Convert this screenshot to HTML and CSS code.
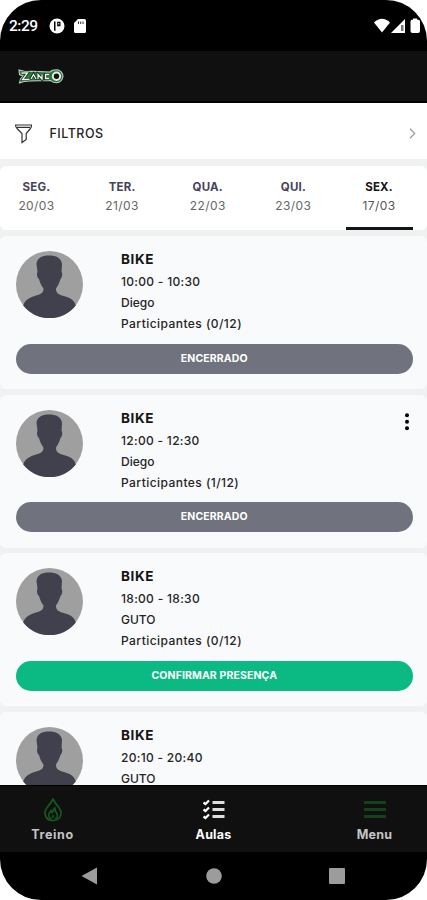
FILE: index.html
```html
<!DOCTYPE html>
<html lang="pt-BR">
<head>
<meta charset="utf-8">
<title>Aulas</title>
<link rel="stylesheet" href="styles.css">
</head>
<body>
<svg class="defs" width="0" height="0" aria-hidden="true">
  <symbol id="person" viewBox="0 0 67 67">
    <circle cx="33.5" cy="33.5" r="33.5" fill="#a09fa0"/>
    <path fill="#41404d" d="M20.500 13C21 7 26 4.500 33 4.500S45.500 7 46 13L45.500 21C47 22 46 27 44.500 28C43 33 41.500 35 40 37.500C40 42 42 43 46 44.500C53 46.500 58 48 59.800 54.500A33.500 33.500 0 0 1 7.200 54.500C9 48.500 14 46.500 20 44.500C25 43 27.500 42 27.500 37.500C25.500 35 24 32 23 28C21 27 20.500 22 21.500 21Z"/>
  </symbol>
</svg>
<div class="phone">
  <header class="status">
    <span class="clock">2:29</span>
    <svg class="app-dot" viewBox="0 0 16 16"><circle cx="8" cy="8" r="7.500" fill="#fff"/><path d="M5 3.500V11.500Q5 13 6.500 13V3.500ZM8.200 3.800H11.500V8.200H8.200Z" fill="#000"/><path d="M9.300 5H10.300V6.500H9.300Z" fill="#fff"/></svg>
    <svg class="sd" viewBox="0 0 12 14"><path d="M4 0H10.500Q12 0 12 1.500V12.500Q12 14 10.500 14H1.500Q0 14 0 12.500V4Z" fill="#fff"/><path d="M4.500 2.500V5M6.700 2.500V5M9 2.500V5" stroke="#333" stroke-width="1"/></svg>
    <svg class="signals" viewBox="0 0 48 16"><path d="M0 4.500Q8-3 16 4.500L8 14.500Z" fill="#fff"/><path d="M31 1V15H17Z" fill="#fff"/><path d="M27 7H29.500V13H27Z" fill="#777"/><path d="M39 1.500V.5H43V1.500Q46 1.500 46 3.500V13Q46 15 44 15H38.500Q36.500 15 36.500 13V3.500Q36.500 1.500 39 1.500Z" fill="#fff"/></svg>
  </header>
  <div class="brand">
    <svg viewBox="0 0 46 15" role="img" aria-label="Zanco"><path d="M1 1L7 2.500L14 2.300L32 3Q34 .8 38.500 .8Q42.500 .8 44.500 5L45 7.500Q44 13.500 38.500 13.800Q34.500 13.800 32.500 11.500L12 12L6 12.500L1.500 14L2.500 10L5 7L1.500 5.500Z" fill="#267a3b" stroke="#c5cdc7" stroke-width="1.100"/><path d="M3.500 4H9.500L4.500 10.500H11.500M12.500 10.500L15.500 5L18 10.500M20 10.500V5.500L24 10.500V5.500M31 5.500H27V10H31" fill="none" stroke="#102b19" stroke-width="2.600"/><path d="M3.500 4H9.500L4.500 10.500H11.500M13 10L15.500 5.500L18 10M20 10V5.500L24 10V5.500M31 5.500H27.500V9.500H31" fill="none" stroke="#f0f5f0" stroke-width="1.300"/><circle cx="38.500" cy="7.300" r="3.700" fill="#111" stroke="#e5eae5" stroke-width="2"/></svg>
  </div>
  <section class="filters">
    <svg class="funnel" viewBox="0 0 20 20"><path d="M1.500 1H17.500Q18 3 16 5L12.200 9.500V15.500L8 18.500V9.500L3.500 5Q1.500 3 1.500 1ZM3 3.300H16" fill="none" stroke="#333" stroke-width="1.200"/></svg>
    <span class="filters-label">FILTROS</span>
    <svg class="chevron" viewBox="0 0 6 10"><path d="M.7.700L5 5L.7 9.300" fill="none" stroke="#999" stroke-width="1.100"/></svg>
  </section>
  <nav class="days">
    <div class="day"><b>SEG.</b><span>20/03</span></div>
    <div class="day"><b>TER.</b><span>21/03</span></div>
    <div class="day"><b>QUA.</b><span>22/03</span></div>
    <div class="day"><b>QUI.</b><span>23/03</span></div>
    <div class="day active"><b>SEX.</b><span>17/03</span></div>
  </nav>
  <main class="list">
    <article class="card">
      <div class="info"><svg class="avatar"><use href="#person"/></svg><div class="text"><h2>BIKE</h2><p class="time">10:00 - 10:30</p><p>Diego</p><p class="count">Participantes (0/12)</p></div></div>
      <div class="button">ENCERRADO</div>
    </article>
    <article class="card">
      <div class="info"><svg class="avatar"><use href="#person"/></svg><div class="text"><h2>BIKE</h2><p class="time">12:00 - 12:30</p><p>Diego</p><p class="count">Participantes (1/12)</p></div><svg class="more" viewBox="0 0 4 18"><circle cx="2" cy="2.200" r="2"/><circle cx="2" cy="8.700" r="2"/><circle cx="2" cy="15.200" r="2"/></svg></div>
      <div class="button">ENCERRADO</div>
    </article>
    <article class="card">
      <div class="info"><svg class="avatar"><use href="#person"/></svg><div class="text"><h2>BIKE</h2><p class="time">18:00 - 18:30</p><p>GUTO</p><p class="count">Participantes (0/12)</p></div></div>
      <div class="button confirm">CONFIRMAR PRESENÇA</div>
    </article>
    <article class="card">
      <div class="info"><svg class="avatar"><use href="#person"/></svg><div class="text"><h2>BIKE</h2><p class="time">20:10 - 20:40</p><p>GUTO</p></div></div>
    </article>
  </main>
  <nav class="tabs">
    <div class="tab"><svg viewBox="0 0 24 24"><path d="M12 1Q14 5 17.500 9Q20.500 12.500 20 16Q19 22.500 12 22.500T4 16Q3.500 12.500 6.500 9Q10 5 12 1Z" fill="none" stroke="#155a1c" stroke-width="1.700"/><path d="M10.500 21Q7 19 8 15.500L10 12.500L11 14.500L14 9.500Q13.500 13 15.500 15Q18 19 14 21M12 20V17" fill="none" stroke="#155a1c" stroke-width="1.600"/></svg><span class="treino">Treino</span></div>
    <div class="tab current"><svg viewBox="0 0 24 24"><path d="M10.500 4.500H22.500M10.500 11.500H22.500M10.500 18.500H22.500" stroke="#ddd" stroke-width="3"/><path d="M1.500 4.500L3.500 6L7 2.500M1.500 11.500L3.500 13L7 9.500M1.500 18.500L3.500 20L7 16.500" fill="none" stroke="#fff" stroke-width="2.200"/></svg><span>Aulas</span></div>
    <div class="tab"><svg viewBox="0 0 24 24"><path d="M1 4.500H23M1 11.500H23M1 18.500H23" stroke="#14401a" stroke-width="2.800"/></svg><span>Menu</span></div>
  </nav>
  <footer class="system">
    <svg viewBox="0 0 18 18"><path d="M.5 9L16 .5V17.500Z"/></svg>
    <svg viewBox="0 0 18 18"><circle cx="9" cy="9" r="7.800"/></svg>
    <svg viewBox="0 0 18 18"><rect x="1" y="1" width="16" height="16" rx="1"/></svg>
  </footer>
</div>
</body>
</html>
```
FILE: styles.css
```css
* { box-sizing: border-box; }
html, body { margin: 0; background: #fff; overflow: hidden; }
body { font-family: Inter, "Liberation Sans", sans-serif; }
.defs { display: block; height: 0; }
.phone {
  width: 427px; height: 900px;
  display: flex; flex-direction: column;
  background: #f0f1f1; border-radius: 41px; overflow: hidden;
}
.status {
  flex: none; height: 51px; background: #000; color: #fff;
  display: flex; align-items: center; padding: 1px 5px 0 9px;
}
.clock { width: 40px; font: 500 15.500px Roboto, sans-serif; letter-spacing: -.5px; }
.app-dot { width: 16px; height: 16px; }
.sd { width: 12px; height: 14px; margin-left: 9px; }
.signals { width: 48px; height: 16px; margin-left: auto; }
.brand { flex: none; height: 52px; padding: 18px 0 0 18px; background: #101010; border-bottom: 2px solid #000; }
.brand svg { display: block; width: 46px; height: 15px; }
.filters { flex: none; height: 56px; background: #fff; display: flex; align-items: center; padding: 5px 11px 0 14px; }
.funnel { width: 20px; height: 20px; }
.filters-label { margin-left: 15.500px; font-size: 12.500px; font-weight: 500; color: #222; letter-spacing: .5px; }
.chevron { width: 7px; height: 11px; margin-left: auto; }
.days { flex: none; height: 64px; margin-top: 7px; background: #fff; border-radius: 6px; display: flex; justify-content: space-between; padding: 0 14.500px 0 3px; }
.day { width: 67px; padding-top: 12px; border-bottom: 3px solid transparent; display: flex; flex-direction: column; align-items: center; font-size: 12px; line-height: 18.500px; color: #666; letter-spacing: .4px; }
.day b { font-size: 11.500px; color: #45435a; letter-spacing: .2px; }
.day.active { border-color: #101515; color: #555; }
.day.active b { color: #151515; }
.list { flex: 1; min-height: 0; overflow: hidden; padding-top: 6px; display: flex; flex-direction: column; gap: 5.700px; }
.card { flex: none; height: 153px; padding: 15px 14.500px 0 16px; background: #f9fafc; border-radius: 6px; }
.info { height: 92.500px; display: flex; align-items: flex-start; }
.avatar { width: 67px; height: 67px; flex: none; }
.text { margin-left: 38px; margin-top: -2px; color: #242424; font-size: 12px; font-weight: 450; }
.text h2 { margin: 0; font-size: 13.500px; line-height: 21px; height: 22px; font-weight: 700; color: #151515; letter-spacing: .6px; }
.text p { margin: 0; height: 21px; line-height: 21px; }
.text .time { letter-spacing: .3px; }
.text .count { letter-spacing: .45px; }
.more { width: 4px; height: 18px; margin: 3px 3.500px 0 auto; }
.button { height: 30px; border-radius: 15px; background: #70727e; color: #fff; text-align: center; font-size: 10.500px; line-height: 29px; font-weight: 700; letter-spacing: .12px; }
.button.confirm { background: #0bba83; }
.tabs { flex: none; height: 67px; background: #101010; border-top: 1px solid #000; display: flex; justify-content: space-between; padding: 0 16px; }
.tab { width: 73px; padding-top: 12px; display: flex; flex-direction: column; align-items: center; color: #c4c4c4; font-size: 12.500px; line-height: 18px; font-weight: 700; letter-spacing: .2px; }
.tab svg { width: 24px; height: 24px; margin-bottom: 4px; }
.current { color: #fff; }
.treino { letter-spacing: .6px; }
.system { flex: none; height: 48px; background: #000; display: flex; justify-content: space-between; align-items: center; padding: 0 81px; }
.system svg { width: 18px; height: 18px; fill: #9c9c9c; }
```
